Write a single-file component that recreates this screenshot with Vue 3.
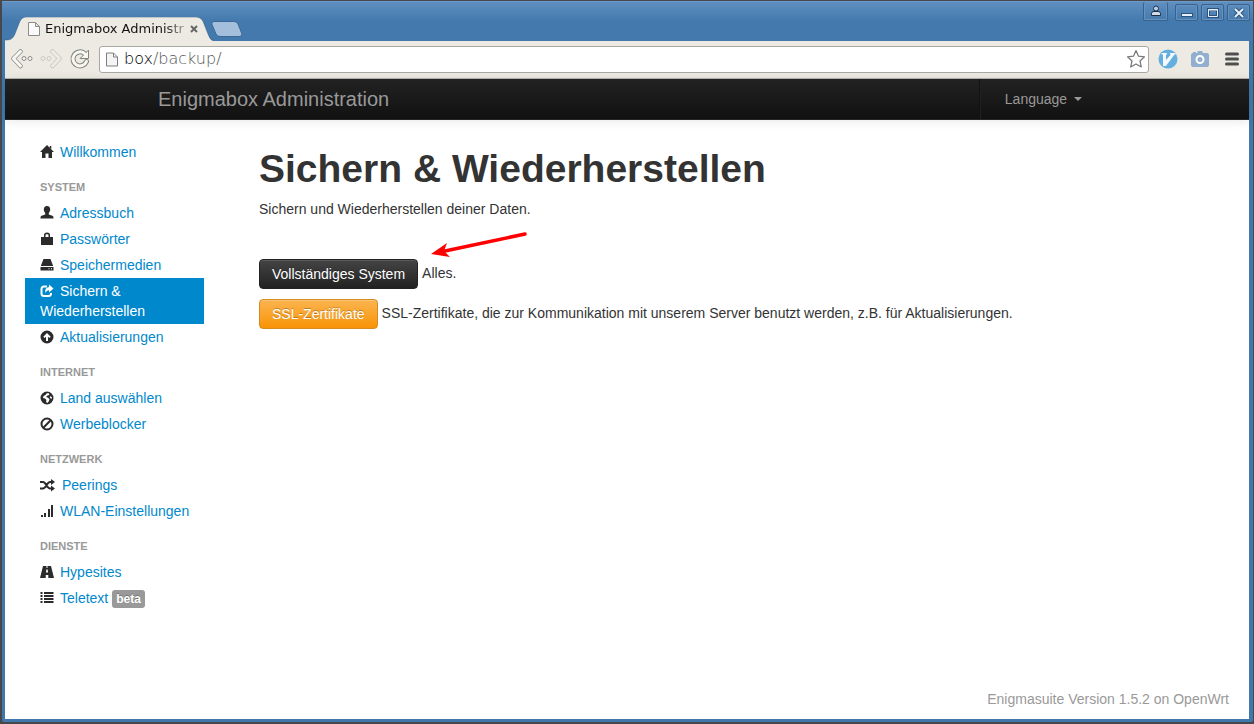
<script setup>
const paths = {
  home: 'M7 0L14 7H12V13H8.5V8.5H5.5V13H2V7H0L7 0ZM9.8 1H11.3V4L9.8 2.7Z',
  user: 'M7 0C9.2 0 10.3 1.5 10.2 3.6C10.1 5.3 9.5 6.3 8.8 7V8.4L12.3 9.8C13.2 10.2 13.5 10.8 13.5 12.5H.5C.5 10.8.8 10.2 1.7 9.8L5.2 8.4V7C4.5 6.3 3.9 5.3 3.8 3.6C3.7 1.5 4.8 0 7 0Z',
  lock: 'M4 5V3C4 1.500 5 .5 7 .5S10 1.500 10 3V5H13V13H1V5ZM5.500 5H8.500V3.200C8.500 2.500 8 2.200 7 2.200S5.500 2.500 5.500 3.200Z',
  disk: 'M3.500 1H10.500L13.200 8H.800ZM.500 9H13.500V12.500H.500ZM8.500 10.300V11.300H9.500V10.300ZM11 10.300V11.300H12V10.300Z',
  globe: 'M7 .5A6.500 6.500 0 1 1 7 13.500A6.500 6.500 0 1 1 7 .5ZM8.500 2L6.500 2.500L5.500 4L3.500 5L3 7L5 7.500L6.500 9L6 11L7.500 12L9 10L9.500 8L7.500 6.500L6 6L7.500 4.500L9.500 4ZM10.500 5L9.700 6.500L11.500 8L12 6.500Z',
  up: 'M7 .5A6.500 6.500 0 1 1 7 13.500A6.500 6.500 0 1 1 7 .5ZM7 3L3.300 6.700L4.700 8L6 6.700V11H8V6.700L9.300 8L10.700 6.700Z',
  signal: 'M1 11H3V13H1ZM4 9H6V13H4ZM8 5H10V13H8ZM11 1H13V13H11Z',
  road: 'M3 1H6.500V3H7.500V1H11L14 13H8.300V10H5.700V13H0ZM6.300 4.500L6 7.500H8L7.700 4.500Z',
  list: 'M.5 1H2.500V3H.5ZM4 1H13.500V3H4ZM.5 4H2.500V6H.5ZM4 4H13.500V6H4ZM.5 7H2.500V9H.5ZM4 7H13.500V9H4ZM.5 10H2.500V12H.5ZM4 10H13.500V12H4Z'
}
const groups = [
  { items: [{ icon: 'home', text: 'Willkommen' }] },
  { title: 'System', items: [
    { icon: 'user', text: 'Adressbuch' },
    { icon: 'lock', text: 'Passwörter' },
    { icon: 'disk', text: 'Speichermedien' },
    { icon: 'share', text: 'Sichern & Wiederherstellen', active: true },
    { icon: 'up', text: 'Aktualisierungen' }
  ] },
  { title: 'Internet', items: [
    { icon: 'globe', text: 'Land auswählen' },
    { icon: 'ban', text: 'Werbeblocker' }
  ] },
  { title: 'Netzwerk', items: [
    { icon: 'shuffle', text: 'Peerings' },
    { icon: 'signal', text: 'WLAN-Einstellungen' }
  ] },
  { title: 'Dienste', items: [
    { icon: 'road', text: 'Hypesites' },
    { icon: 'list', text: 'Teletext', badge: 'beta' }
  ] }
]
</script>

<template>
  <div class="window">
    <header class="titlebar">
      <div class="tab">
        <svg class="tab-shape" viewBox="0 0 212 25" preserveAspectRatio="none" aria-hidden="true">
          <path d="M0 25V24C7 24 8 22 10 18L15 5Q17 0 22 0H194Q200 0 202 5L207 18Q209 24 212 25Z" fill="#edeae3" />
          <path d="M0 24C7 24 8 22 10 18L15 5Q17 0 22 0H194Q200 0 202 5L207 18Q209 24 212 24" fill="none" stroke="#2e5780" stroke-opacity=".5" />
        </svg>
        <svg class="page-icon" viewBox="0 0 12 14" aria-hidden="true"><path d="M.5.5H7.500L11.500 4.500V13.500H.5ZM7.500.5V4.500H11.500" fill="#fafafa" stroke="#8b8b8b" /></svg>
        <span class="tab-title">Enigmabox Administr</span>
        <button class="tab-close" aria-label="Tab schließen"><svg viewBox="0 0 8 8"><path d="M1 1L7 7M7 1L1 7" stroke="#666" stroke-width="2" /></svg></button>
      </div>
      <button class="new-tab" aria-label="Neuer Tab"><svg viewBox="0 0 32 16"><path d="M3 .5H23Q26 .5 27 3L31 13Q31 15.500 28 15.500H9Q6 15.500 5 13L.8 3Q.5.5 3 .5Z" fill="#a3bfdb" stroke="#3a6796" /></svg></button>
      <div class="controls">
        <button class="ctl profile" aria-label="Profil"><svg viewBox="0 0 12 12"><path d="M1.500 10.500V8.500Q1.500 6.500 4 6.500H8Q10.500 6.500 10.500 8.500V10.500Z" fill="#cfdcea" stroke="#1c3047" /><circle cx="6" cy="3.500" r="2.500" fill="#b9d0e6" stroke="#1c3047" /></svg></button>
        <button class="ctl" aria-label="Minimieren"><svg viewBox="0 0 12 12"><path d="M0 8H12" stroke="#2a547f" stroke-width="4" /><path d="M1 8H11" stroke="#e8eff6" stroke-width="2" /></svg></button>
        <button class="ctl" aria-label="Maximieren"><svg viewBox="0 0 12 12"><path d="M1.500 2.500H10.500V9.500H1.500Z" fill="none" stroke="#2a547f" stroke-width="3" /><path d="M1.500 2.500H10.500V9.500H1.500ZM1 3H11" fill="none" stroke="#e8eff6" /></svg></button>
        <button class="ctl" aria-label="Schließen"><svg viewBox="0 0 12 12"><path d="M2 2L10 10M10 2L2 10" stroke="#2a547f" stroke-width="4" /><path d="M2 2L10 10M10 2L2 10" stroke="#e8eff6" stroke-width="2" /></svg></button>
      </div>
    </header>

    <div class="toolbar">
      <button class="nav-btn" aria-label="Zurück">
        <svg viewBox="0 0 22 22"><path d="M9.500 3.500L2.500 10.500L9.500 18" fill="none" stroke="#8f8f89" stroke-width="4.500" stroke-linecap="round" stroke-linejoin="round" /><path d="M9.500 3.500L2.500 10.500L9.500 18" fill="none" stroke="#f7f7f4" stroke-width="3" stroke-linecap="round" stroke-linejoin="round" /><g fill="#f4f3ef" stroke="#8b8b86"><circle cx="13" cy="10.500" r="2" /><circle cx="19" cy="10.500" r="2" /></g></svg>
      </button>
      <button class="nav-btn faded" aria-label="Vorwärts">
        <svg viewBox="0 0 22 22"><path d="M12.500 3.500L19.500 10.500L12.500 18" fill="none" stroke="#85857f" stroke-width="4.500" stroke-linecap="round" stroke-linejoin="round" /><path d="M12.500 3.500L19.500 10.500L12.500 18" fill="none" stroke="#f0eeea" stroke-width="3" stroke-linecap="round" stroke-linejoin="round" /><g fill="#f0eeea" stroke="#8b8b86"><circle cx="9" cy="10.500" r="2" /><circle cx="3" cy="10.500" r="2" /></g></svg>
      </button>
      <button class="nav-btn" aria-label="Neu laden">
        <svg viewBox="0 0 22 22"><g fill="none" stroke-linecap="round"><path d="M15.500 5.500A7 7 0 1 0 17.500 13.500" stroke="#85857f" stroke-width="5" /><path d="M11.500 10.500H19.500V2.500Z" fill="#f7f7f4" stroke="#85857f" stroke-linejoin="round" /><path d="M15.500 5.500A7 7 0 1 0 17.500 13.500" stroke="#f7f7f4" stroke-width="3" /></g></svg>
      </button>
      <div class="omnibox">
        <svg class="page-icon url-icon" viewBox="0 0 12 14" aria-hidden="true"><path d="M.5.5H7.500L11.500 4.500V13.500H.5ZM7.500.5V4.500H11.500" fill="#f4f4f4" stroke="#7e7e7e" /></svg>
        <span class="url"><b>box</b>/backup/</span>
        <button class="star" aria-label="Lesezeichen"><svg viewBox="0 0 20 20"><path d="M10 1.500L12.500 7.200L18.500 7.800L14 12L15.300 18L10 14.900L4.700 18L6 12L1.500 7.800L7.500 7.200Z" fill="#fff" stroke="#777" stroke-width="1.200" stroke-linejoin="round" /></svg></button>
      </div>
      <button class="ext" aria-label="Vimium"><svg viewBox="0 0 20 20"><circle cx="10" cy="10" r="9.500" fill="#64aee0" /><path d="M3.500 4H9V5.500H8V11L13 5.500H12V4H17.500V5.500H16.500L8 17H5V5.500H3.500Z" fill="#fff" opacity=".92" /></svg></button>
      <button class="ext" aria-label="Screenshot"><svg viewBox="0 0 20 20"><path d="M3 4V3H6V4H7L8 2H12L13 4H17Q19 4 19 6V16Q19 18 17 18H3Q1 18 1 16V6Q1 4 3 4Z" fill="#93afd0" /><circle cx="10" cy="10.500" r="3.500" fill="#93afd0" stroke="#fff" stroke-width="2" /></svg></button>
      <button class="ext menu" aria-label="Menü"><svg viewBox="0 0 14 14"><path d="M1.500 2H12.500M1.500 7H12.500M1.500 12H12.500" stroke="#4e4e4e" stroke-width="3" stroke-linecap="round" /></svg></button>
    </div>

    <div class="page">
      <nav class="navbar">
        <div class="container">
          <a class="brand" href="#">Enigmabox Administration</a>
          <a class="language" href="#">Language <span class="caret"></span></a>
        </div>
      </nav>

      <div class="content">
        <nav class="sidebar">
          <template v-for="(group, g) in groups" :key="g">
            <h2 v-if="group.title">{{ group.title }}</h2>
            <ul>
              <li v-for="item in group.items" :key="item.text">
                <a href="#" :class="{ active: item.active }">
                  <svg class="icon" :class="{ wide: item.icon === 'shuffle' }" :viewBox="item.icon === 'shuffle' ? '0 0 16 14' : '0 0 14 14'" aria-hidden="true">
                    <g v-if="item.icon === 'share'" fill="none" stroke="currentColor" stroke-width="2">
                      <path d="M7 2.500H4Q1.500 2.500 1.500 5V9.500Q1.500 12 4 12H8.500Q11 12 11 9.500V9" />
                      <path d="M9 .5L13.500 4.500L9 8.500V6.200Q6.500 6 5.500 9Q4 4 9 3Z" fill="currentColor" stroke="none" />
                    </g>
                    <g v-else-if="item.icon === 'ban'" fill="none" stroke="currentColor" stroke-width="2">
                      <circle cx="7" cy="7" r="5.500" /><path d="M3.300 10.700L10.700 3.300" />
                    </g>
                    <g v-else-if="item.icon === 'shuffle'">
                      <path d="M0 4H3C6 4 7 10.500 10 10.500H12M0 10.500H3C6 10.500 7 4 10 4H12" fill="none" stroke="currentColor" stroke-width="2" />
                      <path d="M11 1L15 4L11 7ZM11 7.500L15 10.500L11 13.500Z" fill="currentColor" />
                    </g>
                    <path v-else :d="paths[item.icon]" fill="currentColor" fill-rule="evenodd" />
                  </svg>{{ item.text }}<span v-if="item.badge" class="badge">{{ item.badge }}</span>
                </a>
              </li>
            </ul>
          </template>
        </nav>

        <main>
          <h1>Sichern &amp; Wiederherstellen</h1>
          <p>Sichern und Wiederherstellen deiner Daten.</p>
          <div class="actions">
            <div class="action">
              <button class="btn dark">Vollständiges System</button>
              <span>Alles.</span>
              <svg class="arrow" viewBox="0 0 96 28" aria-hidden="true"><path d="M94 2L14 19" stroke="#f00" stroke-width="3.500" stroke-linecap="round" /><path d="M0 22L16 11L13 19L19 25Z" fill="#f00" /></svg>
            </div>
            <div class="action">
              <button class="btn orange">SSL-Zertifikate</button>
              <span>SSL-Zertifikate, die zur Kommunikation mit unserem Server benutzt werden, z.B. für Aktualisierungen.</span>
            </div>
          </div>
        </main>
      </div>
      <footer>Enigmasuite Version 1.5.2 on OpenWrt</footer>
    </div>
  </div>
</template>

<style>
body { background: #4a4a4a; }
</style>

<style scoped>
* { box-sizing: border-box; }
button { padding: 0; border: 0; background: none; font: inherit; color: inherit; }
a { text-decoration: none; }
svg { display: block; flex: none; }

.window {
  display: flex;
  flex-direction: column;
  min-height: 100vh;
  padding: 0 4px 3px 3px;
  border: 1px solid #46484c;
  border-left-width: 2px;
  border-bottom-width: 2px;
  border-radius: 4px;
  background: #4178ac;
  font-family: "Liberation Sans", Arial, sans-serif;
  font-size: 14px;
  line-height: 20px;
  color: #333;
}
.titlebar {
  display: flex;
  align-items: flex-end;
  height: 40px;
  margin: 0 -4px 0 -3px;
  padding-left: 3px;
  background: linear-gradient(#5f8fc0, #4379ad 50%);
  border-top: 1px solid #6c9ac8;
}
.tab {
  position: relative;
  display: flex;
  align-items: center;
  width: 208px;
  height: 24px;
  padding: 0 15px 0 23px;
}
.tab-shape { position: absolute; inset: 0; width: 100%; height: 100%; }
.page-icon { position: relative; width: 12px; height: 14px; }
.tab-title {
  position: relative;
  flex: 1;
  margin-left: 5px;
  white-space: nowrap;
  font-family: "DejaVu Sans", sans-serif;
  font-size: 13px;
  background: linear-gradient(90deg, #111 84%, #aaa);
  background-clip: text;
  color: transparent;
}
.tab-close { position: relative; margin-left: 4px; }
.tab-close svg { width: 8px; height: 8px; }
.new-tab { align-self: center; margin: 14px 0 0 -2px; }
.new-tab svg { width: 32px; height: 16px; }
.controls { display: flex; align-self: flex-start; gap: 3px; margin-left: auto; padding-right: 3px; }
.ctl {
  display: flex;
  align-items: center;
  justify-content: center;
  width: 23px;
  height: 17px;
  margin-top: 2px;
  border: 1px solid #35628f;
  border-radius: 2px;
  box-shadow: inset 0 0 0 1px #6892bd;
}
.ctl svg { width: 12px; height: 12px; }
.profile { width: 25px; margin: 0 4px 0 0; height: 19px; border-top: 0; }

.toolbar {
  display: flex;
  align-items: center;
  height: 38px;
  padding: 0 10px 1px 6px;
  gap: 7px;
  background: #edeae3;
  border-bottom: 1px solid #b5b2ac;
}
.nav-btn svg { width: 22px; height: 22px; }
.faded { opacity: .35; }
.omnibox {
  display: flex;
  align-items: center;
  flex: 1;
  height: 27px;
  margin-left: 1px;
  padding: 0 2px 0 6px;
  border: 1px solid #aaa8a3;
  border-radius: 3px;
  background: #fff;
}
.url-icon { height: 15px; }
.url { flex: 1; margin-left: 6px; font: 300 16px/22px "DejaVu Sans", sans-serif; color: #555; }
.url b { font-weight: inherit; color: #000; }
.star svg, .ext svg { width: 20px; height: 20px; }
.ext { margin-left: 2px; }
.ext + .ext { margin-left: 5px; }
.ext.menu svg { width: 14px; height: 14px; margin-left: 3px; }

.page { flex: 1; display: flex; flex-direction: column; background: #fff; }
.navbar {
  display: flex;
  justify-content: center;
  background: linear-gradient(#222, #111);
  border-bottom: 1px solid #252525;
  box-shadow: 0 1px 10px rgba(0, 0, 0, .1);
}
.container { display: flex; justify-content: space-between; width: 940px; padding-left: 1px; }
.brand { padding: 10px 0; font-size: 20px; line-height: 20px; color: #999; }
.language {
  padding: 10px 15px 10px 25px;
  border-left: 1px solid #111;
  box-shadow: inset 1px 0 #222;
  line-height: 20px;
  color: #999;
}
.caret {
  display: inline-block;
  margin: 0 0 3px 3px;
  border: 4px solid transparent;
  border-top-color: #999;
  border-bottom: 0;
}
.content { flex: 1; display: flex; padding: 19px 20px; }
.sidebar { flex: none; width: 179px; }
.sidebar h2 {
  margin: 9px 0 0;
  padding: 3px 15px;
  font-size: 11px;
  line-height: 20px;
  color: #999;
  text-transform: uppercase;
}
ul { margin: 0; padding: 0; list-style: none; }
li a { display: block; padding: 3px 8px 3px 15px; color: #0088cc; }
.icon { display: inline-block; width: 14px; height: 14px; margin-right: 6px; vertical-align: -2px; color: #2b2b2b; }
.wide { width: 16px; }
li .active { background: #0088cc; color: #fff; }
.active .icon { color: #fff; }
.badge {
  margin-left: 4px;
  padding: 2px 4px;
  border-radius: 3px;
  background: #999;
  font-size: 12px;
  font-weight: bold;
  line-height: 14px;
  color: #fff;
  text-shadow: 0 -1px rgba(0, 0, 0, .25);
}
main { flex: 1; padding-left: 55px; }
h1 { margin: 10px 0; font-size: 39px; line-height: 40px; }
p { margin: 0; }
.actions { display: flex; flex-direction: column; align-items: flex-start; gap: 10px; margin-top: 40px; }
.action { position: relative; display: flex; gap: 4px; }
.action span { line-height: 28px; }
.btn {
  height: 30px;
  padding: 0 12px;
  border: 1px solid #222;
  border-radius: 4px;
  white-space: nowrap;
  color: #fff;
  text-shadow: 0 -1px rgba(0, 0, 0, .25);
}
.dark { background: linear-gradient(#444, #222); box-shadow: inset 0 1px rgba(255, 255, 255, .12); }
.orange { background: linear-gradient(#fbb450, #f89406); border-color: #d78a1d; box-shadow: inset 0 1px rgba(255, 255, 255, .2); }
.arrow { position: absolute; right: -71px; bottom: 29px; width: 96px; height: 28px; }
footer { padding: 10px 20px; text-align: right; color: #999; }
</style>
